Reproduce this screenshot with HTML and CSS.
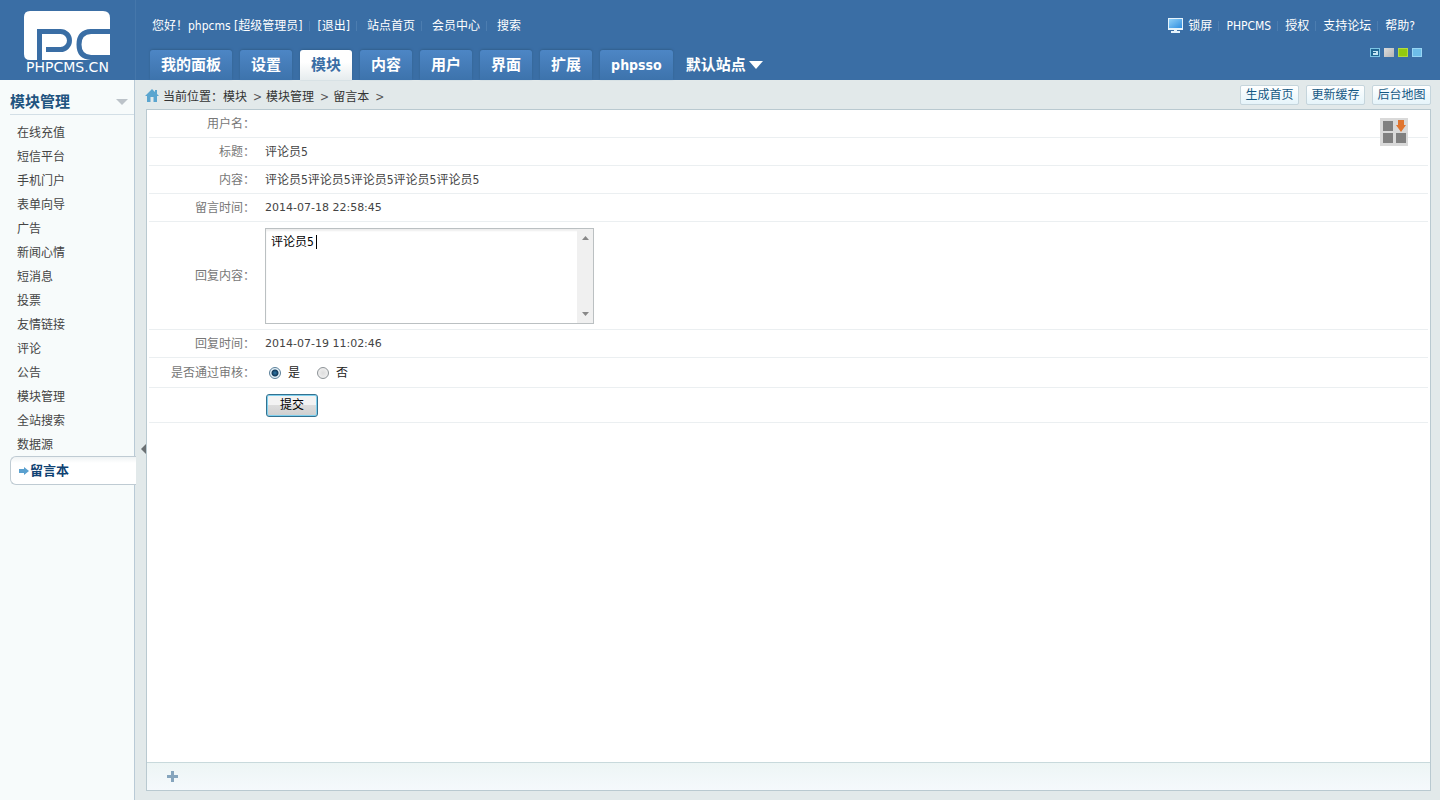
FILE: index.html
```html
<!DOCTYPE html>
<html lang="zh-CN">
<head>
<meta charset="utf-8">
<title>PHPCMS</title>
<link rel="stylesheet" href="styles.css">
</head>
<body>
<header class="header">
  <div class="logo">
    <svg class="logo-mark" width="86" height="51" viewBox="0 0 86 51" aria-hidden="true">
      <path fill="#fff" d="M6 0H79Q86 0 86 7V49H6Q0 49 0 43V6Q0 0 6 0Z"/>
      <path fill="none" stroke="#3a6ea5" stroke-width="5" d="M15.500 51V20.500H36.500A9 9 0 0 1 36.500 38.500H22"/>
      <path fill="none" stroke="#3a6ea5" stroke-width="5" d="M86 20.500H67Q55 21 55 33.500Q55 46 67 46.500H86"/>
    </svg>
    <span class="logo-text">PHPCMS.CN</span>
  </div>
  <div class="header-main">
    <div class="top-links">
      <span class="hello">您好！phpcms [超级管理员]</span>
      <a class="logout" href="#">[退出]</a>
      <a href="#">站点首页</a>
      <a href="#">会员中心</a>
      <a href="#">搜索</a>
    </div>
    <nav class="tabs">
      <a class="tab" href="#">我的面板</a>
      <a class="tab" href="#">设置</a>
      <a class="tab tab-on" href="#">模块</a>
      <a class="tab" href="#">内容</a>
      <a class="tab" href="#">用户</a>
      <a class="tab" href="#">界面</a>
      <a class="tab" href="#">扩展</a>
      <a class="tab tab-latin" href="#">phpsso</a>
      <button class="site" type="button">默认站点<svg width="14" height="8" viewBox="0 0 14 8"><path fill="#fff" d="M0 0H14L7 8Z"/></svg></button>
    </nav>
  </div>
  <div class="header-side">
    <div class="side-links">
      <a class="lock" href="#"><svg width="15" height="16" viewBox="0 0 15 16"><defs><linearGradient id="scr" x2="1" y2="1"><stop stop-color="#8fd0f8"/><stop offset="1" stop-color="#2f8ee0"/></linearGradient></defs><path fill="#e6f3fb" d="M0 0H15V12H9V13H12V15H3V13H6V12H0Z"/><path fill="url(#scr)" d="M1 1H14V10H1Z"/></svg>锁屏</a>
      <a href="#">PHPCMS</a>
      <a href="#">授权</a>
      <a href="#">支持论坛</a>
      <a href="#">帮助?</a>
    </div>
    <div class="skins">
      <button class="skin" type="button" aria-label="蓝色"><svg width="10" height="9" viewBox="0 0 10 9"><path fill="#7cc4e4" d="M0 0H10V9H0Z"/><path fill="#1f6794" d="M1 1H9V8H1Z"/><path fill="#c4e4f2" d="M3 3H8V7H3Z"/><path fill="#1f6794" d="M3 4H6V5H3Z"/></svg></button>
      <button class="skin skin-gray" type="button" aria-label="灰色"></button>
      <button class="skin skin-green" type="button" aria-label="绿色"></button>
      <button class="skin skin-sky" type="button" aria-label="天蓝"></button>
    </div>
  </div>
</header>
<div class="body">
  <aside class="sidebar">
    <h2 class="side-title">模块管理<svg width="12" height="6" viewBox="0 0 12 6"><path fill="#bcc3c9" d="M0 0H12L6 6Z"/></svg></h2>
    <ul class="menu">
      <li><a href="#">在线充值</a></li>
      <li><a href="#">短信平台</a></li>
      <li><a href="#">手机门户</a></li>
      <li><a href="#">表单向导</a></li>
      <li><a href="#">广告</a></li>
      <li><a href="#">新闻心情</a></li>
      <li><a href="#">短消息</a></li>
      <li><a href="#">投票</a></li>
      <li><a href="#">友情链接</a></li>
      <li><a href="#">评论</a></li>
      <li><a href="#">公告</a></li>
      <li><a href="#">模块管理</a></li>
      <li><a href="#">全站搜索</a></li>
      <li><a href="#">数据源</a></li>
      <li class="menu-on"><a href="#"><svg width="10" height="8" viewBox="0 0 10 8"><path fill="#5aa0cf" d="M0 2H5V0L10 4L5 8V6H0Z"/></svg>留言本</a></li>
    </ul>
  </aside>
  <button class="collapse" type="button" aria-label="收起"><svg width="5" height="10" viewBox="0 0 5 10"><path fill="#6b7073" d="M5 0V10L0 5Z"/></svg></button>
  <main class="main">
    <div class="crumb-bar">
      <svg class="home" width="14" height="13" viewBox="0 0 14 13"><path fill="#5aa5cf" d="M7 0L10 3V1H12V5L14 7H12V13H8.500V8H5.500V13H2V7H0Z"/></svg>
      <div class="crumbs">当前位置：<a href="#">模块</a><i>&gt;</i><a href="#">模块管理</a><i>&gt;</i><a href="#">留言本</a><i>&gt;</i></div>
      <div class="actions">
        <button type="button">生成首页</button>
        <button type="button">更新缓存</button>
        <button type="button">后台地图</button>
      </div>
    </div>
    <section class="frame">
      <form class="content">
        <table class="form">
          <tr><th>用户名：</th><td></td></tr>
          <tr><th>标题：</th><td>评论员5</td></tr>
          <tr><th>内容：</th><td>评论员5评论员5评论员5评论员5评论员5</td></tr>
          <tr><th>留言时间：</th><td class="date">2014-07-18 22:58:45</td></tr>
          <tr class="row-reply"><th><label for="reply">回复内容：</label></th><td>
            <div class="reply-box">
              <textarea id="reply" spellcheck="false">评论员5</textarea>
              <span class="caret"></span>
              <span class="scroll"><svg width="7" height="4" viewBox="0 0 7 4"><path fill="#888" d="M0 4H7L3.500 0Z"/></svg><svg width="7" height="4" viewBox="0 0 7 4"><path fill="#888" d="M0 0H7L3.500 4Z"/></svg></span>
            </div></td></tr>
          <tr><th>回复时间：</th><td class="date">2014-07-19 11:02:46</td></tr>
          <tr class="row-radio"><th>是否通过审核：</th><td><div class="radios">
            <label><input type="radio" name="passed" checked>是</label>
            <label><input type="radio" name="passed">否</label></div></td></tr>
          <tr class="row-submit"><th></th><td><button class="submit" type="button">提交</button></td></tr>
        </table>
      </form>
      <button class="grid-btn" type="button" aria-label="面板"><svg width="28" height="28" viewBox="0 0 28 28"><path fill="#d9d9d9" d="M0 0H28V28H0Z"/><path fill="#808080" d="M3 3H13V13H3ZM3 15H13V25H3ZM16 15H26V25H16Z"/><path fill="#e0752f" d="M18 2H24V7H26L21 14L16 7H18Z"/></svg></button>
      <div class="quick"><button type="button" aria-label="添加"><svg width="11" height="11" viewBox="0 0 11 11"><path fill="#86a5bd" d="M4 0H7V4H11V7H7V11H4V7H0V4H4Z"/></svg></button></div>
    </section>
  </main>
</div>
</body>
</html>
```

FILE: styles.css
```css
* { box-sizing: border-box; }
body {
  margin: 0;
  min-height: 100vh;
  display: flex;
  flex-direction: column;
  background: #e2e9ea;
  color: #444;
  font: 12px/24px "DejaVu Sans Condensed", "Noto Sans CJK SC", sans-serif;
}
a { color: inherit; text-decoration: none; }
button { font: inherit; padding: 0; border: 0; background: none; color: inherit; cursor: pointer; }
svg { display: block; flex: none; }

.header { display: flex; height: 80px; background: #3a6ea5; color: #fff; white-space: nowrap; }
.logo {
  width: 136px;
  padding: 11px 0 0 24px;
  border-right: 1px solid #4577ab;
}
.logo-text { display: block; margin: -3px 0 0 2px; font: 14px/16px "DejaVu Sans", sans-serif; }
.header-main { flex: 1; display: flex; flex-direction: column; justify-content: space-between; padding: 14px 0 0 14px; }
.top-links { display: flex; padding-left: 2px; }
.top-links > * + *, .side-links > * + * { background: linear-gradient(#4c7db0, #4c7db0) 6px 7px / 1px 10px no-repeat; padding-left: 13px; }
.top-links > * + * { padding-left: 15px; }
.top-links > * + * + * { padding-left: 17px; }
.tabs { display: flex; gap: 8px; font: bold 15px/30px "DejaVu Sans Condensed", "Noto Sans CJK SC", sans-serif; }
.tab {
  height: 30px;
  padding: 0 11px;
  border-radius: 3px 3px 0 0;
  background: linear-gradient(#4d86c5, #3d73ac);
  box-shadow: 0 -1px 2px #31608f;
}
.tab-on { background: linear-gradient(#fff 40%, #e6ecee); color: #3a6ea5; }
.tab-latin { font-size: 14px; }
.site { display: flex; align-items: center; gap: 3px; margin-left: 5px; }
.header-side { display: flex; flex-direction: column; align-items: flex-end; padding: 14px 18px 0 0; }
.side-links { display: flex; padding-right: 7px; }
.side-links > a + a { padding-left: 14px; }
.lock { display: flex; align-items: center; gap: 5px; }
.skins { display: flex; gap: 4px; padding-top: 10px; }
.skin { width: 10px; height: 9px; }
.skin-gray { background: linear-gradient(135deg, #dcdcdc, #b5b5b5); }
.skin-green { border: 1px solid #b4dc3c; background: #93ca10; }
.skin-sky { border: 1px solid #97d5f4; background: #6dbde8; }

.body { flex: 1; display: flex; }
.sidebar { width: 135px; background: #f7fbfb; border-right: 1px solid #b9cad6; }
.side-title {
  display: flex;
  align-items: center;
  justify-content: space-between;
  height: 35px;
  margin: 0 0 6px 10px;
  padding: 9px 6px 0 0;
  border-bottom: 1px solid #d3dfe6;
  color: #1f5480;
  font-size: 15px;
}
.menu { list-style: none; margin: 0; padding: 0; }
.menu a { display: block; padding-left: 17px; }
.menu .menu-on a {
  position: relative;
  display: flex;
  align-items: center;
  gap: 1px;
  height: 29px;
  margin: -1px -2px 0 10px;
  padding-left: 8px;
  border: 1px solid #bfcbd3;
  border-right: 0;
  border-radius: 6px 0 0 6px;
  background: linear-gradient(#eff3f4, #fff 6px);
  color: #0f4273;
  font-size: 13px;
  font-weight: bold;
}
.collapse { width: 11px; display: flex; flex-direction: column; align-items: flex-end; justify-content: center; padding-top: 18px; }
.main { flex: 1; display: flex; flex-direction: column; padding: 0 9px 9px 0; }
.crumb-bar { display: flex; height: 29px; padding-top: 5px; }
.home { margin: 4px 4px 0 -1px; }
.crumbs { flex: 1; color: #333; line-height: 25px; }
.crumbs i { font-style: normal; margin: 0 4px 0 6px; color: #555; }
.actions { display: flex; gap: 7px; }
.actions button {
  width: 59px;
  height: 20px;
  border: 1px solid #c5d5dc;
  border-radius: 2px;
  background: linear-gradient(#fff, #e5f4fa);
  color: #145884;
  line-height: 18px;
}
.frame {
  position: relative;
  flex: 1;
  display: flex;
  flex-direction: column;
  border: 1px solid #b9c9d0;
  background: #fff;
}
.content { flex: 1; padding: 0 2px; }
.form { width: 100%; border-spacing: 0; }
.form th, .form td { height: 28px; padding: 0; border-bottom: 1px solid #ebeff1; text-align: left; line-height: 20px; }
.form th { width: 106px; text-align: right; font-weight: normal; color: #777; }
.form td { padding-left: 10px; }
.form .date { font-family: "DejaVu Sans", sans-serif; font-size: 11px; }
.form .row-reply td { height: 108px; }
.form .row-radio td { height: 30px; }
.form .row-submit td { height: 35px; padding-left: 11px; }
.reply-box { position: relative; display: flex; width: 329px; height: 96px; border: 1px solid #bbc0c2; box-shadow: inset 0 2px 2px #eee; }
.reply-box textarea {
  flex: 1;
  min-width: 0;
  padding: 3px 5px;
  border: 0;
  outline: 0;
  resize: none;
  overflow: hidden;
  background: none;
  color: #000;
  font: inherit;
  line-height: 20px;
}
.caret { position: absolute; left: 50px; top: 6px; width: 1px; height: 14px; background: #000; }
.scroll { display: flex; flex-direction: column; align-items: center; justify-content: space-between; width: 16px; padding: 7px 0; background: #f0f0f0; }
.radios { display: flex; gap: 17px; padding: 1px 0 0 4px; color: #222; }
.radios label { display: flex; align-items: center; gap: 7px; }
.radios input {
  appearance: none;
  width: 12px;
  height: 12px;
  margin: 0;
  border: 1px solid #8c9296;
  border-radius: 50%;
  background: radial-gradient(#ddd, #f6f6f6);
}
.radios input:checked { border-color: #5a7f99; background: radial-gradient(circle, #2d78a8 0, #123a5c 3px, #e5f2f9 4px); }
.submit {
  display: block;
  width: 52px;
  height: 23px;
  border: 1px solid #34718f;
  border-radius: 3px;
  background: linear-gradient(#f3f3f3 50%, #dcdcdc 50%, #cfcfcf);
  box-shadow: inset 0 0 0 1px #7fd0ee;
  color: #000;
  line-height: 20px;
}
.grid-btn { position: absolute; top: 8px; right: 22px; }
.quick { height: 28px; padding: 8px 0 0 20px; border-top: 1px solid #c8d9dc; background: linear-gradient(#edf5f5, #f5f9fc); }
.quick button { display: block; }
```
